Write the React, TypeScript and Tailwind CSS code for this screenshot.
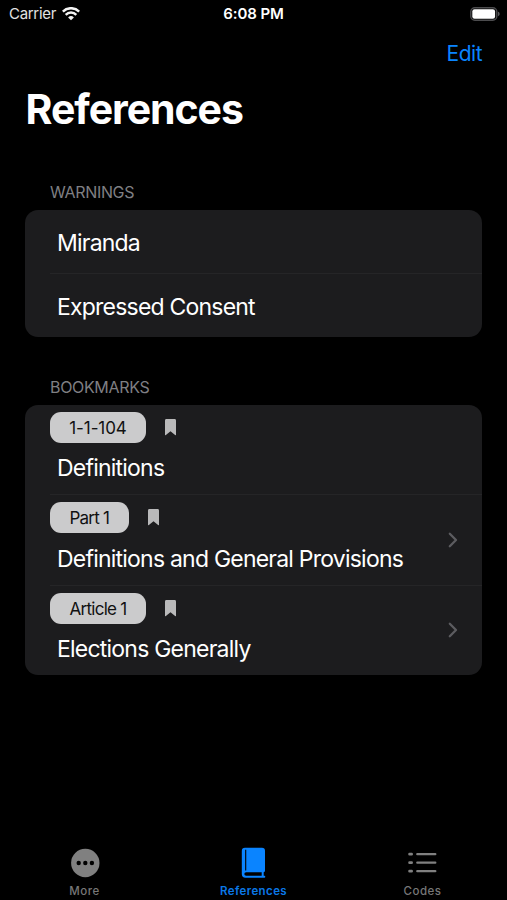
import type { ReactNode } from "react";

type Bookmark = {
  label: string;
  labelStyle: string;
  title: string;
  hasChildren: boolean;
};

const warnings = ["Miranda", "Expressed Consent"];

const bookmarks: Bookmark[] = [
  { label: "1-1-104", labelStyle: "w-[96px] tracking-[-0.1px]", title: "Definitions", hasChildren: false },
  {
    label: "Part 1",
    labelStyle: "w-[78.5px] tracking-[-0.8px]",
    title: "Definitions and General Provisions",
    hasChildren: true,
  },
  { label: "Article 1", labelStyle: "w-[96px] tracking-[-0.75px]", title: "Elections Generally", hasChildren: true },
];

const WifiIcon = () => (
  <svg width="18" height="14" viewBox="0 0 18 14" fill="none" stroke="#f4f4f4" strokeWidth="2.5">
    <path d="M0.8 4.6a11.6 11.6 0 0 1 16.4 0" />
    <path d="M3.7 7.8a7.5 7.5 0 0 1 10.6 0" />
    <path d="M6.1 10.4a4.1 4.1 0 0 1 5.8 0L9 13.3z" fill="#f4f4f4" stroke="none" />
  </svg>
);

const BatteryIcon = () => (
  <svg width="31" height="14" viewBox="0 0 31 14">
    <rect x="0.8" y="0.7" width="26" height="12.6" rx="4" fill="none" stroke="#4c4c4e" strokeWidth="1.4" />
    <rect x="2.3" y="2.3" width="22.8" height="9.4" rx="2.2" fill="#fff" />
    <path d="M28 4.8c2.2.6 2.2 3.8 0 4.4z" fill="#59595b" />
  </svg>
);

const BookmarkIcon = () => (
  <svg width="11" height="17" viewBox="0 0 11 17" fill="#b9b9ba">
    <path d="M1.4 0h8.2Q11 0 11 1.4v14.2q0 1.2-.9.5L5.5 12.2.9 16.1q-.9.7-.9-.5V1.4Q0 0 1.4 0z" />
  </svg>
);

const ChevronIcon = () => (
  <svg
    width="10"
    height="16"
    viewBox="0 0 10 16"
    fill="none"
    stroke="#5c5c60"
    strokeWidth="2.3"
    strokeLinecap="round"
    strokeLinejoin="round"
  >
    <path d="M1.8 1.7 8 8l-6.2 6.300" />
  </svg>
);

const MoreIcon = () => (
  <svg width="30" height="30" viewBox="0 0 30 30">
    <circle cx="15.3" cy="15" r="14.2" fill="#808080" />
    <g fill="#000">
      <circle cx="8.7" cy="15" r="2.2" />
      <circle cx="15.3" cy="15" r="2.2" />
      <circle cx="21.9" cy="15" r="2.2" />
    </g>
  </svg>
);

const BookIcon = () => (
  <svg width="26" height="32" viewBox="0 0 26 32">
    <path
      d="M4 .8h17Q24 .8 24 3.800v19.900q0 1.200-1.300 1.500v3.500h.6q1 0 1 1t-1 1H4.500Q.8 30.700.8 27V4Q.8.8 4 .8z"
      fill="#0a84ff"
    />
    <path d="M4.700 2.700v20.800" stroke="#000" strokeWidth="1.100" />
    <path d="M20.700 25.200v3.500H5.200q-1.900 0-1.900-1.750t1.900-1.750z" fill="#000" />
  </svg>
);

const ListIcon = () => (
  <svg width="30" height="24" viewBox="0 0 30 24" stroke="#808080" strokeWidth="2.3" strokeLinecap="round">
    <path d="M1.600 3.200h2M1.600 11.700h2M1.600 20.200h2" strokeWidth="2.800" />
    <path d="M9.300 3.200h18M9.300 11.700h18M9.300 20.200h18" />
  </svg>
);

const Section = ({ title, children }: { title: string; children: ReactNode }) => (
  <section className="px-[25px]">
    <h2 className="h-[36px] pl-[25px] text-[16px] leading-[36px] tracking-[-0.33px] text-[#7f7f83]">
      {title}
    </h2>
    <div className="overflow-hidden rounded-[13px] bg-[#1c1c1e]">{children}</div>
  </section>
);

const Divider = () => <div className="ml-[25px] h-px bg-[#252527]" />;

const Tab = ({ label, active, children }: { label: string; active?: boolean; children: ReactNode }) => (
  <button
    className={`flex flex-1 flex-col items-center text-[11.5px] leading-4 ${
      active ? "font-semibold tracking-[0.4px] text-[#0a78e8]" : "font-medium tracking-[0.5px] text-[#777777]"
    }`}
  >
    <span className="flex h-[32px] items-center justify-center">{children}</span>
    <span className="mt-[4px]">{label}</span>
  </button>
);

export default function App() {
  return (
    <div className="flex h-[900px] w-[507px] flex-col overflow-hidden bg-black font-['Inter',sans-serif] text-white">
      <header className="grid h-[27px] grid-cols-3 items-center pl-[9px] pr-[6px] text-[15px] leading-[27px]">
        <div className="flex items-center gap-[6px] text-[#e2e2e2]">
          <span className="tracking-[-0.3px]">Carrier</span>
          <WifiIcon />
        </div>
        <span className="-ml-[3px] text-center font-semibold tracking-[-0.1px]">6:08 PM</span>
        <div className="flex justify-end">
          <BatteryIcon />
        </div>
      </header>

      <nav className="flex h-[52px] items-center justify-end pr-[25px]">
        <button className="text-[21px] leading-[53px] tracking-[-0.5px] text-[#0a84ff]">Edit</button>
      </nav>

      <h1 className="h-[95px] pl-[25.5px] text-[41px] font-bold leading-[60px] tracking-[-1.05px]">References</h1>

      <Section title="WARNINGS">
        {warnings.map((title, i) => (
          <div key={title}>
            {i > 0 && <Divider />}
            <div className="flex h-[63px] items-center pl-[32px] pt-[2px] text-[23px] leading-[30px] tracking-[-0.79px]">
              {title}
            </div>
          </div>
        ))}
      </Section>

      <div className="h-[32px]" />

      <Section title="BOOKMARKS">
        {bookmarks.map(({ label, labelStyle, title, hasChildren }, i) => (
          <div key={title}>
            {i > 0 && <Divider />}
            <div className="flex h-[89.3px] items-center justify-between pr-[24px]">
              <div className="h-full pt-[7px]">
                <div className="flex items-center pl-[25px]">
                  <span
                    className={`mr-[19px] h-[31px] rounded-[11px] bg-[#cbcbcc] text-center text-[17px] leading-[32px] text-[#111111] ${labelStyle}`}
                  >
                    {label}
                  </span>
                  <BookmarkIcon />
                </div>
                <div className="mt-[10.3px] pl-[32px] text-[23px] leading-[30px] tracking-[-0.78px]">{title}</div>
              </div>
              {hasChildren && <ChevronIcon />}
            </div>
          </div>
        ))}
      </Section>

      <footer className="mt-auto flex h-[53px]">
        <Tab label="More">
          <MoreIcon />
        </Tab>
        <Tab label="References" active>
          <BookIcon />
        </Tab>
        <Tab label="Codes">
          <ListIcon />
        </Tab>
      </footer>
    </div>
  );
}
